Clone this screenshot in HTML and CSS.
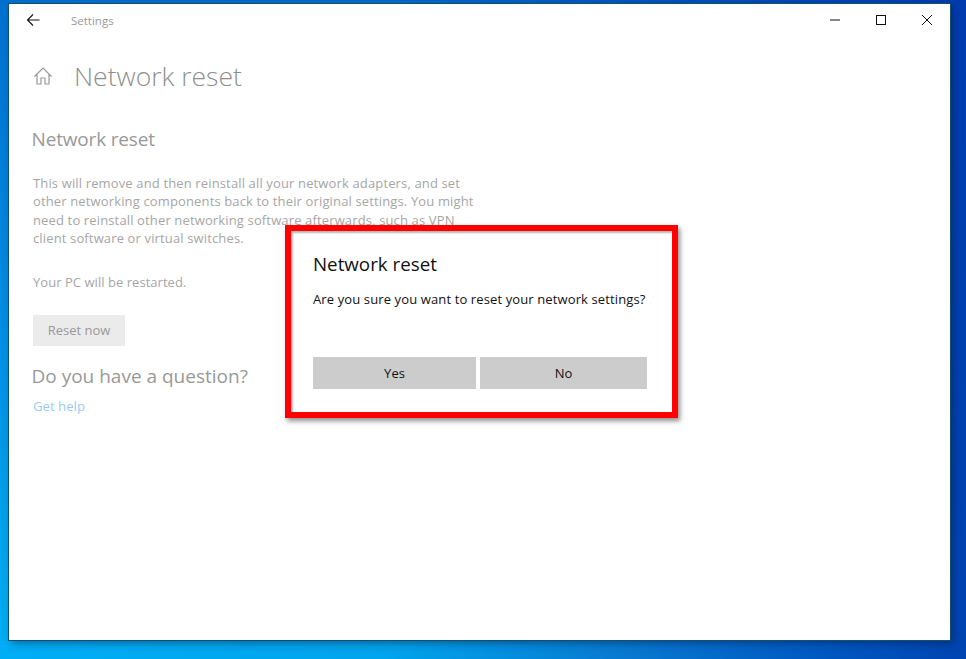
FILE: index.html
```html
<!DOCTYPE html>
<html lang="en">
<head>
<meta charset="utf-8">
<title>Network reset</title>
<link rel="stylesheet" href="styles.css">
</head>
<body>
<div class="window">
  <header class="titlebar">
    <svg class="back" width="16" height="14" viewBox="0 0 16 14"><path d="M13.5 7H1.5M7 1.5 1.5 7 7 12.5" fill="none" stroke="#111" stroke-width="1.1"/></svg>
    <span class="apptitle">Settings</span>
    <div class="controls">
      <svg width="10" height="2" viewBox="0 0 10 2"><path d="M0 1H10" stroke="#111" stroke-width="1"/></svg>
      <svg width="10" height="10" viewBox="0 0 10 10"><rect x=".5" y=".5" width="9" height="9" fill="none" stroke="#111"/></svg>
      <svg width="10" height="10" viewBox="0 0 10 10"><path d="M0 0 10 10M10 0 0 10" stroke="#111" stroke-width="1"/></svg>
    </div>
  </header>
  <main class="content">
    <div class="pagehead">
      <svg class="home" width="20" height="20" viewBox="0 0 20 20"><path d="M1.5 10.500 10 2l8.500 8.500M4 8.500V18h4v-6h4v6h4V8.500" fill="none" stroke="#999" stroke-width="1.200"/></svg>
      <h1>Network reset</h1>
    </div>
    <h2 class="sub1">Network reset</h2>
    <p class="desc">This will remove and then reinstall all your network adapters, and set<br>other networking components back to their original settings. You might<br>need to reinstall other networking software afterwards, such as VPN<br>client software or virtual switches.</p>
    <p class="restart">Your PC will be restarted.</p>
    <button class="reset" type="button">Reset now</button>
    <h2 class="sub2">Do you have a question?</h2>
    <a class="help" href="#">Get help</a>
  </main>
  <div class="dialog">
    <h3>Network reset</h3>
    <p>Are you sure you want to reset your network settings?</p>
    <div class="actions">
      <button class="yes" type="button">Yes</button>
      <button class="no" type="button">No</button>
    </div>
  </div>
</div>
</body>
</html>
```
FILE: styles.css
```css
* { box-sizing: border-box; }
html, body { height: 100%; }
body {
  margin: 0;
  padding: 4px 16px 19px 9px;
  overflow: hidden;
  font-family: "Open Sans", "Noto Sans", sans-serif;
  background:
    linear-gradient(180deg, rgba(0, 50, 170, .5) 0, rgba(0, 50, 170, 0) 100%),
    linear-gradient(90deg, #00aef5 0, #00a4ec 40%, #0878d0 65%, #0058c0 85%, #0044b0 100%);
}
.window {
  position: relative;
  height: 636px;
  background: #fff;
  box-shadow: 0 0 0 1px #14506e, 3px 3px 8px rgba(0, 20, 60, .45);
}
.titlebar {
  display: flex;
  align-items: center;
  height: 32px;
  padding-left: 17px;
}
.back { margin-right: 29px; }
.apptitle { font-size: 11.500px; color: #999; }
.controls {
  display: flex;
  align-items: center;
  margin-left: auto;
  padding-right: 18px;
  gap: 36px;
}
.content { padding-left: 24px; }
.pagehead {
  display: flex;
  align-items: center;
  height: 40px;
  margin-top: 20px;
}
.home { margin-right: 21px; }
h1 {
  margin: 0;
  font-size: 26.500px;
  font-weight: 300;
  color: #8f8f8f;
}
h2 {
  margin: 0 0 0 -1.500px;
  font-size: 19px;
  font-weight: 400;
  color: #999;
}
.sub1 { margin-top: 30px; line-height: 26px; letter-spacing: -.17px; }
.desc {
  margin: 22px 0 0;
  font-size: 13px;
  line-height: 18.400px;
  color: #a6a6a6;
  letter-spacing: .14px;
}
.restart {
  margin: 25px 0 0;
  font-size: 13px;
  line-height: 18px;
  color: #a6a6a6;
  letter-spacing: .04px;
}
.reset {
  display: block;
  width: 92px;
  height: 31px;
  margin: 24px 0 0;
  padding: 0;
  border: 0;
  background: #ebebeb;
  color: #999;
  font: 13px "Open Sans", "Noto Sans", sans-serif;
}
.sub2 { margin-top: 16px; line-height: 28px; }
.help {
  display: block;
  margin-top: 7px;
  font-size: 13.200px;
  line-height: 18px;
  color: #99ccf2;
  text-decoration: none;
}
.dialog {
  position: absolute;
  left: 276px;
  top: 221px;
  width: 393px;
  height: 193px;
  padding: 20px 26px 0 22px;
  background: #fff;
  border: 6px solid #f00;
  box-shadow: 2px 3px 5px rgba(0, 0, 0, .45), inset 2px 2px 2px #b5b5b5;
}
.dialog h3 {
  margin: 0;
  font-size: 18.750px;
  font-weight: 400;
  line-height: 26px;
  color: #111;
}
.dialog p {
  margin: 13px 0 0;
  font-size: 13px;
  line-height: 18px;
  color: #111;
  white-space: nowrap;
  letter-spacing: .12px;
}
.actions {
  display: flex;
  gap: 4px;
  margin-top: 49px;
}
.actions button {
  height: 32px;
  padding: 0;
  border: 0;
  background: #cccccc;
  color: #111;
  font: 13px "Open Sans", "Noto Sans", sans-serif;
}
.yes { width: 163px; }
.no { width: 167px; margin-right: -1px; }
```
